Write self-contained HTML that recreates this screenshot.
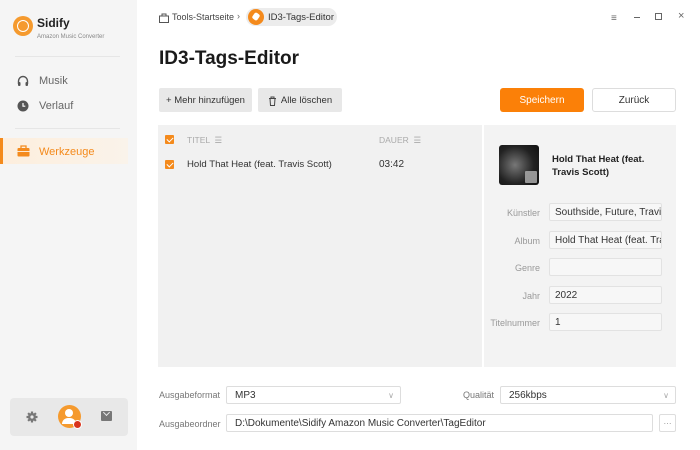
<!DOCTYPE html>
<html><head><meta charset="utf-8"><style>
*{box-sizing:border-box;margin:0;padding:0}
body{width:700px;height:450px;overflow:hidden;font-family:"Liberation Sans",sans-serif;background:#fff;position:relative;color:#333}
.sb{position:absolute;left:0;top:0;width:137px;height:450px;background:#f5f5f5}
.abs{position:absolute}
.f12{font-size:11px}
.inp{position:absolute;height:18px;border:1px solid #e2e2e2;background:#f7f7f7;border-radius:2px;font-size:10px;padding-left:5px;line-height:17px;color:#333;white-space:nowrap;overflow:hidden}
.lbl{position:absolute;font-size:9px;color:#999;text-align:right;width:80px}
.sel{position:absolute;height:18px;border:1px solid #ddd;background:#fff;border-radius:2px;font-size:10px;padding-left:8px;line-height:17px}
.cb{position:absolute;width:9px;height:9px;background:#f48a1c;border-radius:1px}
.cb:after{content:"";position:absolute;left:2.5px;top:0.5px;width:3px;height:5px;border:solid #fff;border-width:0 1.3px 1.3px 0;transform:rotate(45deg)}
.btn{position:absolute;height:24px;border-radius:2px;font-size:9.5px;display:flex;align-items:center;justify-content:center;padding-top:1px}
</style></head><body>
<div class="sb">
  <div class="abs" style="left:13px;top:16px;width:20px;height:20px;border-radius:50%;background:#f59a2e"><div class="abs" style="left:4px;top:4px;width:12px;height:12px;border-radius:50%;border:1.5px solid #fff"></div></div>
  <div class="abs" style="left:37px;top:16px;font-size:12px;font-weight:bold;color:#222">Sidify</div>
  <div class="abs" style="left:37px;top:34px;font-size:6px;color:#888">Amazon Music Converter</div>
  <div class="abs" style="left:15px;top:56px;width:105px;height:1px;background:#e6e6e6"></div>
  <svg class="abs" style="left:17px;top:75px" width="12" height="12" viewBox="0 0 12 12"><path d="M1.5 9V6a4.5 4.5 0 0 1 9 0v3" fill="none" stroke="#555" stroke-width="1.4"/><rect x="1" y="7" width="2.5" height="4" rx="1" fill="#555"/><rect x="8.5" y="7" width="2.5" height="4" rx="1" fill="#555"/></svg>
  <div class="abs f12" style="left:39px;top:75px;color:#666">Musik</div>
  <svg class="abs" style="left:17px;top:100px" width="12" height="12" viewBox="0 0 12 12"><circle cx="6" cy="6" r="5.5" fill="#555"/><path d="M6 3v3.2h2.3" stroke="#fff" stroke-width="1.2" fill="none"/></svg>
  <div class="abs f12" style="left:39px;top:100px;color:#666">Verlauf</div>
  <div class="abs" style="left:15px;top:128px;width:105px;height:1px;background:#e6e6e6"></div>
  <div class="abs" style="left:0;top:138px;width:128px;height:26px;background:linear-gradient(90deg,#fdeedd,#faf3ea)"></div>
  <div class="abs" style="left:0;top:138px;width:3px;height:26px;background:#f48a1c"></div>
  <svg class="abs" style="left:17px;top:145px" width="13" height="12" viewBox="0 0 13 12"><rect x="0.5" y="3" width="12" height="8.5" rx="1" fill="#f48a1c"/><path d="M4 3V1h5v2" fill="none" stroke="#f48a1c" stroke-width="1.3"/><rect x="0.5" y="6" width="12" height="1" fill="#fde7cf"/></svg>
  <div class="abs" style="left:39px;top:146px;font-size:11px;color:#f48a1c">Werkzeuge</div>
  <div class="abs" style="left:10px;top:398px;width:118px;height:38px;background:#e8e8e8;border-radius:4px"></div>
  <svg class="abs" style="left:26px;top:411px" width="12" height="12" viewBox="0 0 12 12"><circle cx="6" cy="6" r="4" fill="#777"/><g stroke="#777" stroke-width="2.2"><path d="M6 0.5v11M0.5 6h11M2.1 2.1l7.8 7.8M9.9 2.1l-7.8 7.8"/></g><circle cx="6" cy="6" r="1.6" fill="#e8e8e8"/></svg>
  <div class="abs" style="left:58px;top:405px;width:23px;height:23px;border-radius:50%;background:#f59a2e"></div>
  <div class="abs" style="left:65px;top:409px;width:8px;height:8px;border-radius:50%;background:#fff"></div>
  <div class="abs" style="left:62px;top:418px;width:14px;height:6px;border-radius:6px 6px 0 0;background:#fff"></div>
  <div class="abs" style="left:73px;top:420px;width:9px;height:9px;border-radius:50%;background:#d9331c;border:1px solid #fff"></div>
  <div class="abs" style="left:101px;top:411px;width:11px;height:10px;background:#777;border-radius:1px"></div>
  <div class="abs" style="left:103px;top:411px;width:5px;height:5px;border:solid #e8e8e8;border-width:0 1px 1px 0;transform:translate(1px,-1px) rotate(45deg)"></div>
</div>

<svg class="abs" style="left:159px;top:13px" width="10" height="10" viewBox="0 0 10 10"><rect x="0.5" y="3" width="9" height="6.5" fill="none" stroke="#555"/><path d="M3 3V1h4v2" fill="none" stroke="#555"/></svg>
<div class="abs" style="left:172px;top:12px;font-size:9px;color:#444">Tools-Startseite</div>
<div class="abs" style="left:237px;top:11px;font-size:9px;color:#666">›</div>
<div class="abs" style="left:246px;top:8px;width:91px;height:18px;border-radius:9px;background:#ececec"></div>
<div class="abs" style="left:248px;top:9px;width:16px;height:16px;border-radius:50%;background:#f48a1c"></div>
<div class="abs" style="left:253px;top:13px;width:6px;height:7px;background:#fff;border-radius:2px;transform:rotate(35deg)"></div>
<div class="abs" style="left:268px;top:12px;font-size:9.5px;color:#333">ID3-Tags-Editor</div>

<div class="abs" style="left:611px;top:13px;font-size:10px;color:#666">≡</div>
<div class="abs" style="left:634px;top:17px;width:6px;height:1px;background:#666"></div>
<div class="abs" style="left:655px;top:13px;width:7px;height:7px;border:1px solid #666"></div>
<div class="abs" style="left:678px;top:10px;font-size:11px;color:#666">×</div>

<div class="abs" style="left:159px;top:48px;font-size:19px;font-weight:bold;color:#1a1a1a">ID3-Tags-Editor</div>

<div class="btn" style="left:159px;top:88px;width:93px;background:#e8e8e8;color:#333">+ Mehr hinzufügen</div>
<div class="btn" style="left:258px;top:88px;width:84px;background:#e8e8e8;color:#333"><svg width="9" height="10" viewBox="0 0 9 10" style="margin-right:4px"><path d="M1 2.5h7M3 2.5V1h3v1.5M2 2.5l.5 7h4l.5-7" fill="none" stroke="#444"/></svg>Alle löschen</div>
<div class="btn" style="left:500px;top:88px;width:84px;background:#fb8008;border-radius:3px;font-size:10px;color:#fff">Speichern</div>
<div class="btn" style="left:592px;top:88px;width:84px;background:#fff;border:1px solid #ddd;border-radius:3px;font-size:10px;color:#333">Zurück</div>

<div class="abs" style="left:158px;top:125px;width:324px;height:242px;background:#f1f1f1"></div>
<div class="abs" style="left:484px;top:125px;width:192px;height:242px;background:#f3f3f3"></div>
<div class="cb" style="left:165px;top:135px"></div>
<div class="abs" style="left:187px;top:135px;font-size:8.5px;color:#aaa">TITEL &nbsp;☰</div>
<div class="abs" style="left:379px;top:135px;font-size:8.5px;color:#aaa">DAUER &nbsp;☰</div>
<div class="cb" style="left:165px;top:160px"></div>
<div class="abs" style="left:187px;top:159px;font-size:9.6px;color:#333">Hold That Heat (feat. Travis Scott)</div>
<div class="abs" style="left:379px;top:159px;font-size:10px;color:#333">03:42</div>

<div class="abs" style="left:499px;top:145px;width:40px;height:40px;border-radius:3px;background:radial-gradient(circle at 40% 50%,#777,#222 60%,#111)"></div>
<div class="abs" style="left:525px;top:171px;width:12px;height:12px;background:#aaa;border-radius:1px;opacity:.85"></div>
<div class="abs" style="left:552px;top:153px;font-size:9.5px;font-weight:bold;color:#222;line-height:13px;width:122px">Hold That Heat (feat. Travis Scott)</div>

<div class="lbl" style="left:460px;top:208px">Künstler</div><div class="inp" style="left:549px;top:203px;width:113px">Southside, Future, Travis</div>
<div class="lbl" style="left:460px;top:236px">Album</div><div class="inp" style="left:549px;top:231px;width:113px">Hold That Heat (feat. Travis</div>
<div class="lbl" style="left:460px;top:263px">Genre</div><div class="inp" style="left:549px;top:258px;width:113px"></div>
<div class="lbl" style="left:460px;top:291px">Jahr</div><div class="inp" style="left:549px;top:286px;width:113px">2022</div>
<div class="lbl" style="left:460px;top:318px">Titelnummer</div><div class="inp" style="left:549px;top:313px;width:113px">1</div>

<div class="abs" style="left:159px;top:390px;font-size:9px;color:#777">Ausgabeformat</div>
<div class="sel" style="left:226px;top:386px;width:175px">MP3<span style="position:absolute;right:6px;color:#aaa;font-size:8px">∨</span></div>
<div class="abs" style="left:463px;top:390px;font-size:9px;color:#777">Qualität</div>
<div class="sel" style="left:500px;top:386px;width:176px">256kbps<span style="position:absolute;right:6px;color:#aaa;font-size:8px">∨</span></div>
<div class="abs" style="left:159px;top:419px;font-size:9px;color:#777">Ausgabeordner</div>
<div class="sel" style="left:226px;top:414px;width:427px">D:\Dokumente\Sidify Amazon Music Converter\TagEditor</div>
<div class="sel" style="left:659px;top:414px;width:17px;padding:0;text-align:center;color:#888;font-size:8px">···</div>
</body></html>
